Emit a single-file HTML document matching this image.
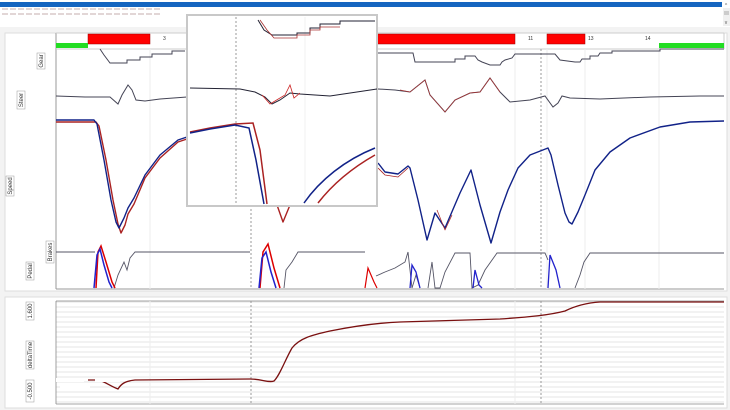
<!DOCTYPE html>
<html><head><meta charset="utf-8"><style>
html,body{margin:0;padding:0;background:#fff;width:730px;height:410px;overflow:hidden;font-family:"Liberation Sans",sans-serif}
</style></head><body>
<svg width="730" height="410" viewBox="0 0 730 410" xmlns="http://www.w3.org/2000/svg" font-family="Liberation Sans, sans-serif">
<rect x="0" y="0" width="730" height="410" fill="#f3f3f3"/>
<rect x="0" y="0" width="730" height="27" fill="#fff"/>
<rect x="0" y="2" width="722" height="5" fill="#1565c0"/>
<rect x="723" y="8" width="7" height="18" fill="#f0f0f0"/>
<text x="726" y="7" font-size="5" fill="#555" text-anchor="middle">^</text>
<text x="726" y="24" font-size="5" fill="#555" text-anchor="middle">v</text>
<rect x="724" y="11" width="5" height="4" fill="#ccc"/>
<line x1="2" y1="9" x2="160" y2="9" stroke="#d8c8c8" stroke-width="1.5" stroke-dasharray="6 2"/>
<line x1="2" y1="14" x2="162" y2="14" stroke="#d8c8c8" stroke-width="1.5" stroke-dasharray="6 2"/>
<!-- upper panel -->
<rect x="5" y="33" width="722" height="258" fill="#fff" stroke="#ddd"/>
<line x1="56" y1="33" x2="56" y2="289" stroke="#999"/>
<line x1="56" y1="289" x2="724" y2="289" stroke="#999"/>
<line x1="56" y1="33" x2="724" y2="33" stroke="#ccc"/>
<line x1="724" y1="33" x2="724" y2="49" stroke="#ccc"/>
<line x1="56" y1="49" x2="724" y2="49" stroke="#ccc"/>
<g stroke="#eee"><line x1="150" y1="49" x2="150" y2="289"/><line x1="515" y1="49" x2="515" y2="289"/><line x1="547" y1="49" x2="547" y2="289"/><line x1="585" y1="49" x2="585" y2="289"/><line x1="659" y1="49" x2="659" y2="289"/></g>
<g stroke="#999" stroke-dasharray="2 2"><line x1="251" y1="33" x2="251" y2="289"/><line x1="541" y1="49" x2="541" y2="289"/></g>
<rect x="88" y="34" width="62" height="10" fill="#f00" stroke="#900" stroke-width=".5"/>
<rect x="376" y="34" width="139" height="10" fill="#f00" stroke="#900" stroke-width=".5"/>
<rect x="547" y="34" width="38" height="10" fill="#f00" stroke="#900" stroke-width=".5"/>
<rect x="56" y="43" width="32" height="5" fill="#2d2"/>
<rect x="659" y="43" width="65" height="5" fill="#2d2"/>
<g font-size="5" fill="#333"><text x="163" y="40">3</text><text x="528" y="40">11</text><text x="588" y="40">13</text><text x="645" y="40">14</text></g>
<!-- labels -->
<g font-size="6" fill="#333">
<g transform="translate(41,61) rotate(-90)"><rect x="-8" y="-4" width="16" height="8" fill="#fff" stroke="#999" stroke-width=".5"/><text text-anchor="middle" y="2">Gear</text></g>
<g transform="translate(21,100) rotate(-90)"><rect x="-9" y="-4" width="18" height="8" fill="#fff" stroke="#999" stroke-width=".5"/><text text-anchor="middle" y="2">Steer</text></g>
<g transform="translate(10,186) rotate(-90)"><rect x="-10" y="-4" width="20" height="8" fill="#fff" stroke="#999" stroke-width=".5"/><text text-anchor="middle" y="2">Speed</text></g>
<g transform="translate(50,252) rotate(-90)"><rect x="-11" y="-4" width="22" height="8" fill="#fff" stroke="#999" stroke-width=".5"/><text text-anchor="middle" y="2">Brakes</text></g>
<g transform="translate(30,271) rotate(-90)"><rect x="-9" y="-4" width="18" height="8" fill="#fff" stroke="#999" stroke-width=".5"/><text text-anchor="middle" y="2">Pedal</text></g>
</g>
<!-- gear -->
<polyline fill="none" stroke="#445" stroke-width="1" points="100,49 104,55 110,63 127,63 127,60 140,60 140,57 152,57 152,54 172,54 172,51 185,51"/>
<polyline fill="none" stroke="#445" stroke-width="1" points="378,53 413,53 415,62 455,62 455,59 465,59 465,56 475,56 478,60 482,62 490,65 500,65 502,62 505,60 512,58 515,54 555,54 560,60 575,62 580,62 582,59 590,59 590,56 598,56 600,53 612,53 612,51 660,51 660,49 724,49"/>
<!-- steer -->
<polyline fill="none" stroke="#445" stroke-width="1" points="56,96 85,97 110,97 118,104 122,95 128,85 132,90 136,100 145,101 160,99 187,97"/>
<polyline fill="none" stroke="#445" stroke-width="1" points="378,89 395,90 410,92 425,80 430,95 445,112 455,100 470,93 480,92 490,78 500,92 510,102 530,100 545,96 553,107 558,103 562,96 570,98 600,99 650,97 700,96 724,96"/>
<polyline fill="none" stroke="#a33" stroke-width=".7" points="400,90 410,92 425,80 430,95 445,112 455,100 470,93 480,92 490,78 500,92"/>
<!-- speed -->
<g fill="none" stroke-width="1.4" stroke-linejoin="round">
<polyline stroke="#a22" points="56,122 96,122 99,126 106,160 113,200 118,224 121,233 125,225 128,214 134,204 145,178 160,158 178,142 187,139"/>
<polyline stroke="#112288" points="56,120 94,120 97,124 104,160 111,200 116,222 119,228 124,218 128,208 134,198 145,175 160,155 178,140 187,137"/>
<polyline stroke="#a22" points="277,205 283,222 290,205"/>
<polyline stroke="#a22" stroke-width=".8" points="378,168 385,175 398,177 408,168"/>
<polyline stroke="#112288" points="378,163 385,172 398,174 408,166 410,168 418,200 427,240 435,213 445,228 460,193 471,170 480,205 491,243 500,212 508,190 518,168 530,155 548,148 551,155 558,185 565,213 569,222 572,224 578,212 585,195 595,170 610,152 630,138 660,127 690,122 724,121"/>
<polyline stroke="#a22" stroke-width=".7" points="437,210 445,230 452,215"/>
</g>
<!-- brakes -->
<g fill="none" stroke-width=".9">
<polyline stroke="#556" points="56,252 95,252"/>
<polyline stroke="#556" points="114,288 118,275 124,262 127,270 130,258 135,252 250,252"/>
<polyline stroke="#556" points="284,288 286,270 292,262 298,252 365,252"/>
<polyline stroke="#556" points="376,276 385,272 395,268 405,262 408,252 412,288 416,275 420,288"/>
<polyline stroke="#556" points="428,288 432,262 435,288 440,288 445,272 455,253 470,253 472,288 478,285 485,270 497,253 545,253 548,260"/>
<polyline stroke="#556" points="575,288 580,275 584,262 590,253 724,253"/>
<polyline stroke="#d00" stroke-width="1.5" points="96,288 98,252 101,246 106,262 112,282 115,288"/>
<polyline stroke="#22c" stroke-width="1.5" points="94,288 97,255 100,249 104,265 109,282 112,288"/>
<polyline stroke="#d00" stroke-width="1.5" points="260,288 263,252 268,244 274,268 280,288"/>
<polyline stroke="#22c" stroke-width="1.5" points="259,288 262,258 266,252 271,272 276,288"/>
<polyline stroke="#d00" stroke-width="1.2" points="365,288 368,268 374,282 377,288"/>
<polyline stroke="#22c" stroke-width="1.3" points="410,288 412,265 416,272 420,288"/>
<polyline stroke="#22c" stroke-width="1.3" points="473,288 475,270 479,285 482,288"/>
<polyline stroke="#22c" stroke-width="1.3" points="548,288 550,255 556,270 560,288"/>
</g>
<!-- lower panel -->
<rect x="5" y="297" width="722" height="111" fill="#fff" stroke="#ddd"/>
<g stroke="#ccc" stroke-width=".6">
<line x1="56" y1="302" x2="724" y2="302"/><line x1="56" y1="307" x2="724" y2="307"/><line x1="56" y1="312" x2="724" y2="312"/><line x1="56" y1="317" x2="724" y2="317"/><line x1="56" y1="322" x2="724" y2="322"/><line x1="56" y1="327" x2="724" y2="327"/><line x1="56" y1="332" x2="724" y2="332"/><line x1="56" y1="337" x2="724" y2="337"/><line x1="56" y1="342" x2="724" y2="342"/><line x1="56" y1="347" x2="724" y2="347"/><line x1="56" y1="352" x2="724" y2="352"/><line x1="56" y1="357" x2="724" y2="357"/><line x1="56" y1="362" x2="724" y2="362"/><line x1="56" y1="367" x2="724" y2="367"/><line x1="56" y1="372" x2="724" y2="372"/><line x1="56" y1="377" x2="724" y2="377"/><line x1="56" y1="382" x2="724" y2="382"/><line x1="56" y1="387" x2="724" y2="387"/><line x1="56" y1="392" x2="724" y2="392"/><line x1="56" y1="397" x2="724" y2="397"/><line x1="56" y1="402" x2="724" y2="402"/>
</g>
<g stroke="#888" stroke-width=".8"><line x1="56" y1="301" x2="724" y2="301"/><line x1="56" y1="404" x2="724" y2="404"/><line x1="56" y1="301" x2="56" y2="404"/></g>
<g stroke="#eee"><line x1="150" y1="301" x2="150" y2="404"/><line x1="515" y1="301" x2="515" y2="404"/></g>
<g stroke="#999" stroke-dasharray="2 2"><line x1="251" y1="301" x2="251" y2="404"/><line x1="541" y1="301" x2="541" y2="404"/></g>
<path fill="none" stroke="#7a1010" stroke-width="1.3" d="M88,380 L98,380 C104,381 110,386 118,389 C121,384 125,381 135,380 L250,379 C262,379 268,383 274,381 C280,375 285,360 292,348 C300,338 312,335 330,331 C350,327 375,323 400,322 L500,319 C530,317 550,315 565,311 C575,306 585,303 600,302 L724,302"/>
<g fill="#fff"><rect x="56" y="378" width="28" height="4"/><rect x="60" y="386" width="30" height="3"/><rect x="95" y="379" width="25" height="3"/></g>
<g font-size="6" fill="#333">
<g transform="translate(30,311) rotate(-90)"><rect x="-9" y="-4" width="18" height="8" fill="#fff" stroke="#999" stroke-width=".5"/><text text-anchor="middle" y="2">1.600</text></g>
<g transform="translate(30,355) rotate(-90)"><rect x="-14" y="-4" width="28" height="8" fill="#fff" stroke="#999" stroke-width=".5"/><text text-anchor="middle" y="2">deltaTime</text></g>
<g transform="translate(30,391) rotate(-90)"><rect x="-11" y="-4" width="22" height="8" fill="#fff" stroke="#999" stroke-width=".5"/><text text-anchor="middle" y="2">-0.500</text></g>
</g>
<!-- inset -->
<rect x="187" y="15" width="190" height="191" fill="#fff" stroke="#c8c8c8" stroke-width="2"/>
<line x1="236" y1="17" x2="236" y2="204" stroke="#999" stroke-dasharray="2 2"/>
<line x1="305" y1="17" x2="305" y2="204" stroke="#f2f2f2"/>
<polyline fill="none" stroke="#223" stroke-width="1" points="258,20 264,30 272,35 297,35 297,33 310,33 310,28 320,28 320,24 340,24 340,21 375,21"/>
<polyline fill="none" stroke="#a33" stroke-width=".8" points="260,20 267,30 274,38 297,38 297,35 310,35 310,30 320,30 320,27 340,27"/>
<polyline fill="none" stroke="#223" stroke-width="1" points="190,88 240,89 255,92 265,97 272,104 280,100 290,93 300,94 330,96 377,89"/>
<polyline fill="none" stroke="#c22" stroke-width=".8" points="262,95 270,104 285,95 290,85 294,98 300,93"/>
<g fill="none" stroke-width="1.5">
<polyline stroke="#a22" points="190,132 210,128 235,124 253,123 260,150 267,204"/>
<polyline stroke="#112288" points="190,133 210,129 235,125 249,128 256,160 264,204"/>
<path stroke="#112288" d="M304,203 C320,180 345,160 375,148"/>
<path stroke="#a22" d="M318,203 C332,185 352,168 375,155"/>
</g>
</svg>
</body></html>
